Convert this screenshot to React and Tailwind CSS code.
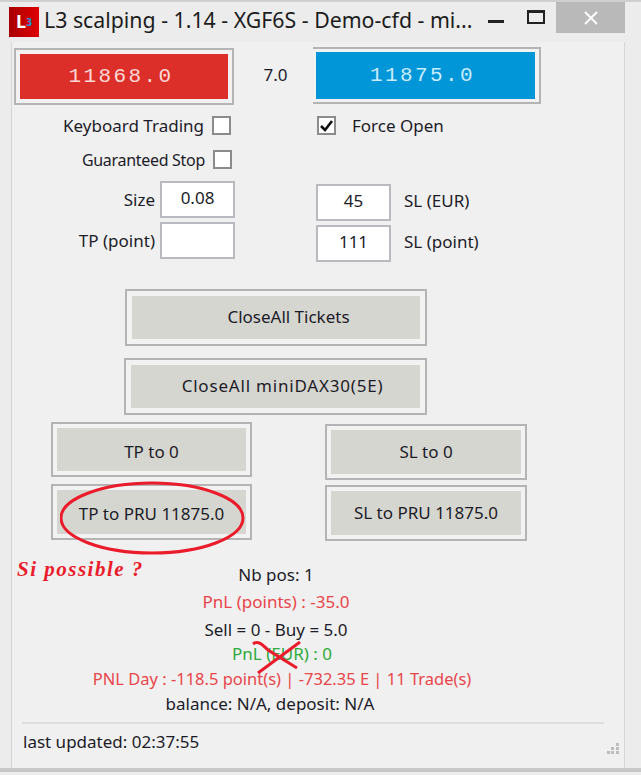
const uiFont = "font-['Noto_Sans','Open_Sans',sans-serif]";

function Bevel({ className, inner, children }) {
  return (
    <button
      className={`flex shrink-0 items-center justify-center border-2 border-[#b4b4b4] bg-[#f2f2f2] text-[17px] text-[#1c1c28] ${className}`}
    >
      <span className={`flex h-full w-full items-center justify-center ${inner}`}>
        {children}
      </span>
    </button>
  );
}

function Check({ checked, className = "" }) {
  return (
    <span
      className={`flex h-[19px] w-[19px] shrink-0 items-center justify-center border-2 border-[#8c8c8c] bg-white ${className}`}
    >
      {checked && (
        <svg width="15" height="15" viewBox="0 0 15 15">
          <path d="M2 8 L6 12 L13 3" fill="none" stroke="#111" strokeWidth="2.6" />
        </svg>
      )}
    </span>
  );
}

function Field({ value = "" }) {
  return (
    <input
      readOnly
      value={value}
      className="h-[37px] w-[75px] border-2 border-[#b9b9c0] bg-white pb-[4px] text-center text-[17px] text-[#1c1c28] outline-none"
    />
  );
}

function App() {
  return (
    <div
      className={`flex h-[775px] w-[641px] flex-col overflow-hidden border-t-2 border-[#cfcfcf] bg-[#ececec] ${uiFont}`}
    >
      {/* title bar */}
      <div className="flex h-[40px] shrink-0 items-start">
        <div className="ml-[9px] mt-[5px] flex h-[30px] w-[30px] items-center justify-center bg-gradient-to-r from-[#a80000] to-[#e00000] pb-[3px] text-[18px] font-bold leading-none text-white">
          L<span className="mt-[3px] text-[10px] text-[#1e9be0]">3</span>
        </div>
        <div className="ml-[5px] mt-[3px] w-[432px] whitespace-nowrap text-[21.3px] leading-[30px] text-[#1c1c1c]">
          L3 scalping - 1.14 - XGF6S - Demo-cfd - mi...
        </div>
        <div className="ml-[12px] mt-[18px] h-[3px] w-[16px] bg-[#222]" />
        <div className="ml-[23px] mt-[8px] h-[14px] w-[18px] border-2 border-t-[3px] border-[#222]" />
        <div className="ml-[11px] flex h-[31px] w-[69px] items-center justify-center bg-[#b9b9b9]">
          <svg width="16" height="14" viewBox="0 0 16 14">
            <path d="M2 1 L14 13 M14 1 L2 13" stroke="#fff" strokeWidth="2" />
          </svg>
        </div>
      </div>

      {/* client area */}
      <div className="relative ml-[11px] h-[726px] w-[614px] shrink-0 border-x border-[#d6d6d6] bg-[#f0f0f0] text-[17px] text-[#1c1c28]">
        {/* prices */}
        <div className="ml-[2px] mt-[5px] flex items-start">
          <Bevel
            className="mt-[1px] h-[57px] w-[220px] p-[4px]"
            inner="bg-[#dc2f2a] pr-[6px] font-['Liberation_Mono',monospace] text-[21px] tracking-[2.4px] text-[#ffd9d6]"
          >
            11868.0
          </Bevel>
          <span className="mt-[15px] w-[79px] pl-[4px] text-center">7.0</span>
          <Bevel
            className="h-[57px] w-[228px] border-l-0 p-[3px] pr-[4px]"
            inner="bg-[#0096d8] pr-[6px] font-['Liberation_Mono',monospace] text-[21px] tracking-[2.4px] text-[#c8ecfc]"
          >
            11875.0
          </Bevel>
        </div>

        {/* options */}
        <div className="mt-[11px] flex h-[19px] items-center">
          <div className="flex w-[219px] items-center justify-end gap-[8px]">
            Keyboard Trading <Check />
          </div>
          <Check checked className="ml-[86px]" />
          <span className="ml-[16px]">Force Open</span>
        </div>
        <div className="mt-[15px] flex h-[19px] w-[220px] items-center justify-end gap-[8px] text-[16px] tracking-[-0.3px]">
          Guaranteed Stop <Check />
        </div>

        {/* fields */}
        <div className="mt-[12px] flex items-start">
          <div className="flex w-[223px] flex-col gap-[4px]">
            <div className="flex items-center justify-end gap-[5px]">
              Size <Field value="0.08" />
            </div>
            <div className="flex items-center justify-end gap-[5px]">
              TP (point) <Field />
            </div>
          </div>
          <div className="ml-[81px] mt-[3px] flex flex-col gap-[4px]">
            <div className="flex items-center gap-[13px]">
              <Field value="45" /> <span className="pb-[4px]">SL (EUR)</span>
            </div>
            <div className="flex items-center gap-[13px]">
              <Field value="111" /> <span className="pb-[4px]">SL (point)</span>
            </div>
          </div>
        </div>

        {/* close buttons */}
        <Bevel
          className="ml-[113px] mt-[27px] h-[57px] w-[302px] p-[5px]"
          inner="bg-[#d6d6d0] pb-[2px] pl-[25px]"
        >
          CloseAll Tickets
        </Bevel>
        <Bevel
          className="ml-[112px] mt-[12px] h-[57px] w-[303px] p-[5px]"
          inner="bg-[#d6d6d0] pb-[2px] pl-[14px] tracking-[0.8px]"
        >
          CloseAll miniDAX30(5E)
        </Bevel>

        {/* tp / sl */}
        <div className="mt-[7px] flex items-start">
          <div className="ml-[39px] flex flex-col gap-[7px]">
            <Bevel className="h-[55px] w-[201px] p-[4px]" inner="bg-[#d6d6d0] pt-[4px]">
              TP to 0
            </Bevel>
            <Bevel className="h-[56px] w-[201px] p-[4px]" inner="bg-[#d6d6d0] pt-[4px]">
              TP to PRU 11875.0
            </Bevel>
          </div>
          <div className="ml-[73px] mt-[2px] flex flex-col gap-[5px]">
            <Bevel className="h-[56px] w-[202px] p-[4px]" inner="bg-[#d6d6d0]">
              SL to 0
            </Bevel>
            <Bevel className="h-[56px] w-[202px] p-[4px]" inner="bg-[#d6d6d0]">
              SL to PRU 11875.0
            </Bevel>
          </div>
        </div>

        {/* status */}
        <div className="mt-[21px] flex w-[528px] flex-col items-center leading-[26px]">
          <span className="h-[27px]">Nb pos: 1</span>
          <span className="h-[28px] text-[#e8454a]">PnL (points) : -35.0</span>
          <span className="h-[24px]">Sell = 0 - Buy = 5.0</span>
          <span className="ml-[12px] h-[25px] text-[#2eaa3c]">PnL (EUR) : 0</span>
          <span className="ml-[12px] h-[25px] whitespace-nowrap text-[16.5px] text-[#e8454a]">
            PNL Day : -118.5 point(s) | -732.35 E | 11 Trade(s)
          </span>
          <span className="mr-[12px] h-[31px]">balance: N/A, deposit: N/A</span>
        </div>

        {/* status bar */}
        <div className="ml-[10px] w-[582px] border-t-2 border-[#dedede] pl-[1px] pt-[5px] leading-[26px]">
          last updated: 02:37:55
        </div>
        <svg className="absolute bottom-[12px] right-[4px]" width="14" height="14" viewBox="0 0 14 14" fill="#bdbdbd">
          <rect x="10" y="1" width="3" height="3" />
          <rect x="5" y="5" width="3" height="3" />
          <rect x="10" y="5" width="3" height="3" />
          <rect x="1" y="9" width="3" height="3" />
          <rect x="5" y="9" width="3" height="3" />
          <rect x="10" y="9" width="3" height="3" />
        </svg>

        {/* hand drawn annotations */}
        <svg className="absolute left-[48px] top-[439px]" width="190" height="76" viewBox="0 0 190 76">
          <ellipse cx="92" cy="37" rx="91" ry="35" fill="none" stroke="#ea1c2c" strokeWidth="3" />
        </svg>
        <span className="absolute left-[5px] top-[512px] whitespace-nowrap font-['Liberation_Serif',serif] text-[21px] font-bold italic tracking-[1.5px] text-[#ea1c2c]">
          Si possible ?
        </span>
        <svg className="absolute left-[238px] top-[598px]" width="56" height="38" viewBox="0 0 56 38">
          <path d="M3 4 C8 0 13 5 18 10 L47 28 M50 2 L8 33" fill="none" stroke="#ea1c2c" strokeWidth="3" />
        </svg>
      </div>

      <div className="h-[4px] bg-[#c8c8c8]" />
    </div>
  );
}

export default App;
